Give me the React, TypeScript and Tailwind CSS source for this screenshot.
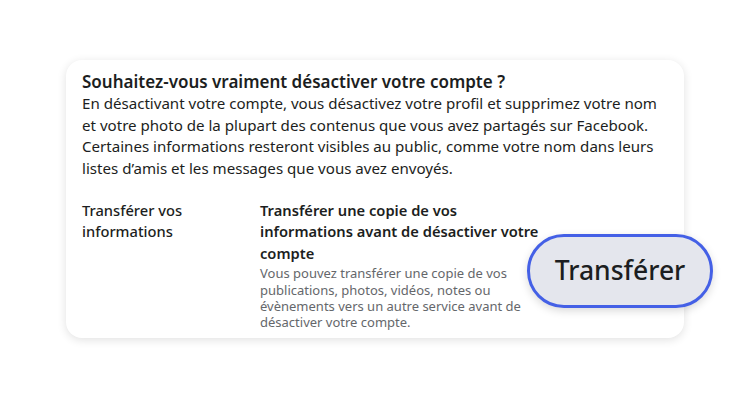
export default function App() {
  return (
    <div className="w-[750px] h-[400px] bg-white font-['Noto_Sans',sans-serif] text-[#1c1e21]">
      <div className="pl-[66px] pt-[60px]">
        <div className="relative w-[618px] h-[278px] rounded-[16px] bg-white shadow-[0_2px_10px_rgba(0,0,0,0.12)] px-4 pt-[11px]">
          <h2 className="text-[17px] leading-[22px] font-semibold">Souhaitez-vous vraiment désactiver votre compte ?</h2>
          <p className="text-[15.1px] leading-[21.7px] text-[#1c1e21]">
            En désactivant votre compte, vous désactivez votre profil et supprimez votre nom
            <br />
            et votre photo de la plupart des contenus que vous avez partagés sur Facebook.
            <br />
            Certaines informations resteront visibles au public, comme votre nom dans leurs
            <br />
            listes d’amis et les messages que vous avez envoyés.
          </p>
          <div className="flex mt-[20px]">
            <div className="w-[178px] shrink-0 text-[14.7px] leading-[21px] font-medium">
              Transférer vos
              <br />
              informations
            </div>
            <div>
              <div className="text-[14.7px] leading-[21.5px] font-semibold">
                Transférer une copie de vos
                <br />
                informations avant de désactiver votre
                <br />
                compte
              </div>
              <p className="text-[13px] leading-[16.3px] text-[#65676b] mt-[1px]">
                Vous pouvez transférer une copie de vos
                <br />
                publications, photos, vidéos, notes ou
                <br />
                évènements vers un autre service avant de
                <br />
                désactiver votre compte.
              </p>
            </div>
          </div>
          <button className="absolute right-[-29px] top-[174px] w-[186px] h-[74px] rounded-full border-[3px] border-[#4460e6] bg-[#e4e6ed] text-[26.5px] font-medium text-[#1c1e21] shadow-[0_3px_8px_rgba(0,0,0,0.15)]">
            Transférer
          </button>
        </div>
      </div>
    </div>
  );
}
